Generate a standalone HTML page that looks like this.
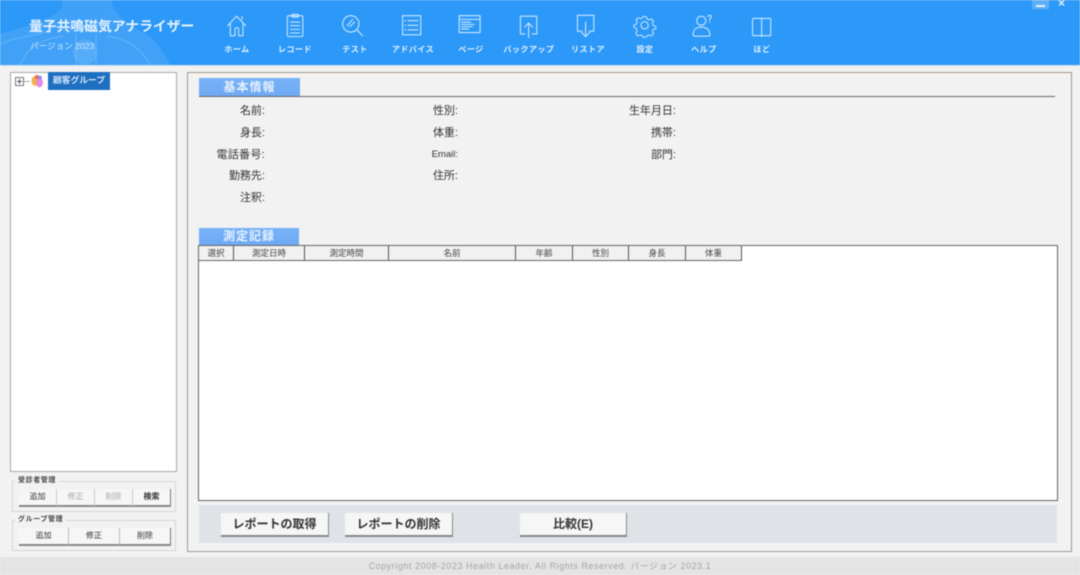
<!DOCTYPE html>
<html lang="ja"><head><meta charset="utf-8">
<style>
html,body{margin:0;padding:0;width:1080px;height:575px;overflow:hidden;background:#f2f2f2}
body{font-family:"Liberation Sans","Noto Sans CJK JP",sans-serif;color:#333;position:relative}
#w{position:absolute;left:0;top:0;width:1080px;height:575px;filter:blur(.6px);overflow:hidden}
#w div,#w svg{position:absolute}
.nav{top:45px;width:70px;text-align:center;color:#e2f1ff;font-size:8px;font-weight:bold;line-height:10px;letter-spacing:.5px;white-space:nowrap}
.ic{top:13px;width:30px;height:30px;fill:none;stroke:#c9e7fd;stroke-width:1.2;stroke-linecap:round;stroke-linejoin:round}
.lb{width:80px;text-align:right;font-size:11px;line-height:14px;color:#333;white-space:nowrap}
.sec{background:linear-gradient(#78b2f7,#6fa9f3);color:#e4f0ff;font-weight:bold;font-size:12px;text-align:center;letter-spacing:1px}
.th{top:246px;height:14px;line-height:14px;background:#f1f1f1;border-right:1px solid #555;border-bottom:1px solid #666;font-size:8.5px;text-align:center;color:#444;white-space:nowrap}
.btn{background:#f6f6f6;border-right:1px solid #888;border-bottom:2px solid #888;box-sizing:border-box;text-align:center;font-weight:bold;color:#333;white-space:nowrap}
.sb{font-size:8px;text-align:center;color:#333;height:17px;line-height:16px;top:0;white-space:nowrap}
.grp{border:1px solid #d5d5d5;box-sizing:border-box}
.gt{font-size:7px;line-height:9px;font-weight:bold;background:#f2f2f2;padding:0 3px;color:#444;letter-spacing:.6px;white-space:nowrap}
</style></head><body><div id="w">

<div style="left:0;top:0;width:1080px;height:66px;background:#2c98f8;border-bottom:1px solid #cfe0ee;box-sizing:border-box"></div>
<svg style="left:0;top:0" width="180" height="65" viewBox="0 0 180 65">
<path d="M0 34C25 26 50 22 62 8L62 0H112C112 10 122 22 146 34C156 40 166 54 170 65H0Z" fill="#5fb0f4" opacity=".4"/>
<path d="M66 0C68 14 72 22 86 26C100 22 106 12 108 0Z" fill="#3da0f5" opacity=".8"/>
<path d="M20 65C28 46 44 38 64 36M150 65C140 46 124 38 106 36M76 65V34M96 65V34M0 44C14 38 30 36 46 32" stroke="#8cc8f6" stroke-width="1.2" fill="none" opacity=".45"/>
<ellipse cx="85" cy="52" rx="12" ry="13" fill="#7fc0f5" opacity=".35"/>
</svg>

<div style="left:29px;top:18px;font-size:13.8px;line-height:18px;font-weight:bold;color:#e6f3ff;white-space:nowrap">量子共鳴磁気アナライザー</div>
<div style="left:30px;top:41px;font-size:8.6px;line-height:11px;color:#cfe8ff;white-space:nowrap">バージョン 2023</div>

<svg class="ic" style="left:223px" viewBox="0 0 33 33"><path d="M5 14 15 3.500 25 14M8 11.500V25h5.200v-7a2 2 0 0 1 4 0v7H22V11.500M21 4v3"/></svg>
<svg class="ic" style="left:281px" viewBox="0 0 33 33"><rect x="7" y="3" width="17" height="23" rx="1.500"/><path d="M12 1.500h7v3h-7zM10.500 10h10M10.500 14h10M10.500 18h10M10.500 22h10"/></svg>
<svg class="ic" style="left:339px" viewBox="0 0 33 33"><circle cx="13" cy="12" r="9"/><path d="M19.500 18.500 26 25M9 14l6-7M12 15l5-5"/></svg>
<svg class="ic" style="left:398px" viewBox="0 0 33 33"><rect x="5" y="3" width="20" height="21"/><path d="M11 8.500h11M11 13.500h11M11 18.500h11M7.500 8.500h1M7.500 13.500h1M7.500 18.500h1"/></svg>
<svg class="ic" style="left:456px" viewBox="0 0 33 33"><rect x="3.500" y="3" width="23" height="18.500"/><path d="M3.500 7h23M6 10h10M6 12.500h14M6 15h12M6 17.500h8"/></svg>
<svg class="ic" style="left:515px" viewBox="0 0 33 33"><path d="M11 23H6V3.500h18V23h-5M15 27V11M10.500 15.500 15 11l4.500 4.500"/></svg>
<svg class="ic" style="left:572px" viewBox="0 0 33 33"><path d="M11 20H6V2.500h18V20h-5M15 10v16M10.500 21.500 15 26l4.500-4.500"/></svg>
<svg class="ic" style="left:631px" viewBox="0 0 33 33"><circle cx="15" cy="13.500" r="4"/><path d="M13 3h4l.8 3 2.700 1.200 2.700-1.500 2.800 2.800-1.500 2.700 1.200 2.800 3 .8v3l-3 .8-1.200 2.700 1.500 2.700-2.800 2.800-2.700-1.500-2.700 1.200-.8 1.500h-4l-.8-1.500-2.700-1.200-2.700 1.500-2.800-2.800 1.500-2.700L4.800 17l-3-.8v-3l3-.8L6 9.700 4.500 7l2.800-2.800L10 5.700l2.200-1.200z" transform="translate(1.500 1.300) scale(.9)"/></svg>
<svg class="ic" style="left:689px" viewBox="0 0 33 33"><circle cx="13.500" cy="8.500" r="5"/><path d="M4.500 24c0-6 4-8.500 9-8.500s9.500 2.500 9.500 8.500c0 1-1 1.500-2 1.500H6.500c-1 0-2-.5-2-1.500zM21 4c0-2 3.500-2 3.500 0s-1.800 1.800-1.800 4M22.700 10v.5"/></svg>
<svg class="ic" style="left:748px" viewBox="0 0 33 33"><path d="M15 6H6a1 1 0 0 0-1 1v17a1 1 0 0 0 1 1h18a1 1 0 0 0 1-1V7a1 1 0 0 0-1-1h-9zM15 6v20"/></svg>

<div class="nav" style="left:202px">ホーム</div>
<div class="nav" style="left:260px">レコード</div>
<div class="nav" style="left:320px">テスト</div>
<div class="nav" style="left:378px">アドバイス</div>
<div class="nav" style="left:436px">ページ</div>
<div class="nav" style="left:494px">バックアップ</div>
<div class="nav" style="left:553px">リストア</div>
<div class="nav" style="left:610px">設定</div>
<div class="nav" style="left:669px">ヘルプ</div>
<div class="nav" style="left:727px">ほど</div>

<div style="left:1032px;top:0;width:17px;height:9px;background:#5eaef5"></div>
<div style="left:1036px;top:5px;width:9px;height:1.500px;background:#e5f2ff"></div>
<div style="left:1058px;top:-4px;font-size:12px;line-height:14px;font-weight:bold;color:#e5f2ff">×</div>

<div style="left:10px;top:72px;width:167px;height:400px;background:#fff;border:1px solid #a8a8a8;box-sizing:border-box"></div>
<div style="left:15px;top:77px;width:9px;height:9px;border:1px solid #777;box-sizing:border-box;background:#fff"></div>
<div style="left:17px;top:81px;width:5px;height:1px;background:#555"></div>
<div style="left:19px;top:79px;width:1px;height:5px;background:#555"></div>
<div style="left:24px;top:81px;width:6px;height:1px;background:#aaa"></div>
<svg style="left:30px;top:74px" width="14" height="15" viewBox="0 0 14 15"><ellipse cx="5" cy="7" rx="3.500" ry="5" fill="#f4b04a"/><ellipse cx="9.500" cy="8.500" rx="3.500" ry="5" fill="#e58ae0"/><circle cx="7" cy="3" r="2" fill="#e86a6a"/><circle cx="10" cy="3.500" r="1.700" fill="#7f8df0"/></svg>
<div style="left:48px;top:72px;width:62px;height:18px;line-height:17px;background:#1f6fc0;color:#cfe4fa;font-size:8.800px;font-weight:bold;text-align:center;white-space:nowrap">顧客グループ</div>

<div class="grp" style="left:12px;top:481px;width:164px;height:31px"></div>
<div class="gt" style="left:15px;top:476px">受診者管理</div>
<div style="left:19px;top:489px;width:152px;height:18px;background:#f6f6f6;border-right:1px solid #777;border-bottom:2px solid #888;box-sizing:border-box">
<div class="sb" style="left:0;width:37px;border-right:1px solid #ccc">追加</div>
<div class="sb" style="left:38px;width:37px;border-right:1px solid #ccc;color:#aaa">修正</div>
<div class="sb" style="left:76px;width:37px;border-right:1px solid #ccc;color:#aaa">削除</div>
<div class="sb" style="left:114px;width:37px;font-weight:bold">検索</div>
</div>

<div class="grp" style="left:12px;top:520px;width:164px;height:31px"></div>
<div class="gt" style="left:15px;top:515px">グループ管理</div>
<div style="left:19px;top:528px;width:152px;height:18px;background:#f6f6f6;border-right:1px solid #777;border-bottom:2px solid #888;box-sizing:border-box">
<div class="sb" style="left:0;width:49px;border-right:1px solid #bbb">追加</div>
<div class="sb" style="left:50px;width:50px;border-right:1px solid #bbb">修正</div>
<div class="sb" style="left:101px;width:50px">削除</div>
</div>

<div style="left:187px;top:72px;width:885px;height:480px;border:1px solid #9a9a9a;box-sizing:border-box;background:#f2f2f2"></div>
<div style="left:188px;top:73px;width:883px;height:4px;background:#f8f1ec"></div>

<div class="sec" style="left:199px;top:78px;width:101px;height:18px;line-height:18px">基本情報</div>
<div style="left:199px;top:96px;width:856px;height:1px;background:#666"></div>

<div class="lb" style="left:185px;top:104px">名前:</div>
<div class="lb" style="left:185px;top:126px">身長:</div>
<div class="lb" style="left:185px;top:148px;letter-spacing:.3px">電話番号:</div>
<div class="lb" style="left:185px;top:169px">勤務先:</div>
<div class="lb" style="left:185px;top:191px">注釈:</div>
<div class="lb" style="left:378px;top:104px">性別:</div>
<div class="lb" style="left:378px;top:126px">体重:</div>
<div class="lb" style="left:378px;top:148px;font-size:9.500px">Email:</div>
<div class="lb" style="left:378px;top:169px">住所:</div>
<div class="lb" style="left:596px;top:104px">生年月日:</div>
<div class="lb" style="left:596px;top:126px">携帯:</div>
<div class="lb" style="left:596px;top:148px">部門:</div>

<div class="sec" style="left:199px;top:228px;width:100px;height:17px;line-height:17px">測定記録</div>

<div style="left:198px;top:245px;width:860px;height:256px;background:#fff;border:1px solid #666;box-sizing:border-box"></div>
<div class="th" style="left:199px;width:34px">選択</div>
<div class="th" style="left:234px;width:70px">測定日時</div>
<div class="th" style="left:305px;width:83px">測定時間</div>
<div class="th" style="left:389px;width:126px">名前</div>
<div class="th" style="left:516px;width:56px">年齢</div>
<div class="th" style="left:573px;width:55px">性別</div>
<div class="th" style="left:629px;width:56px">身長</div>
<div class="th" style="left:686px;width:55px">体重</div>

<div style="left:199px;top:505px;width:858px;height:38px;background:#dfe3e8"></div>
<div class="btn" style="left:221px;top:513px;width:108px;height:24px;font-size:12px;line-height:23px">レポートの取得</div>
<div class="btn" style="left:345px;top:513px;width:108px;height:24px;font-size:12px;line-height:23px">レポートの削除</div>
<div class="btn" style="left:520px;top:513px;width:107px;height:24px;font-size:12px;line-height:23px">比較(E)</div>

<div style="left:0;top:557px;width:1080px;height:18px;background:#e4e4e4"></div>
<div style="left:0;top:560px;width:1080px;text-align:center;font-size:8.800px;line-height:12px;color:#a5a5a5;letter-spacing:.64px;white-space:nowrap">Copyright 2008-2023 Health Leader. All Rights Reserved. バージョン 2023.1</div>

</div></body></html>
